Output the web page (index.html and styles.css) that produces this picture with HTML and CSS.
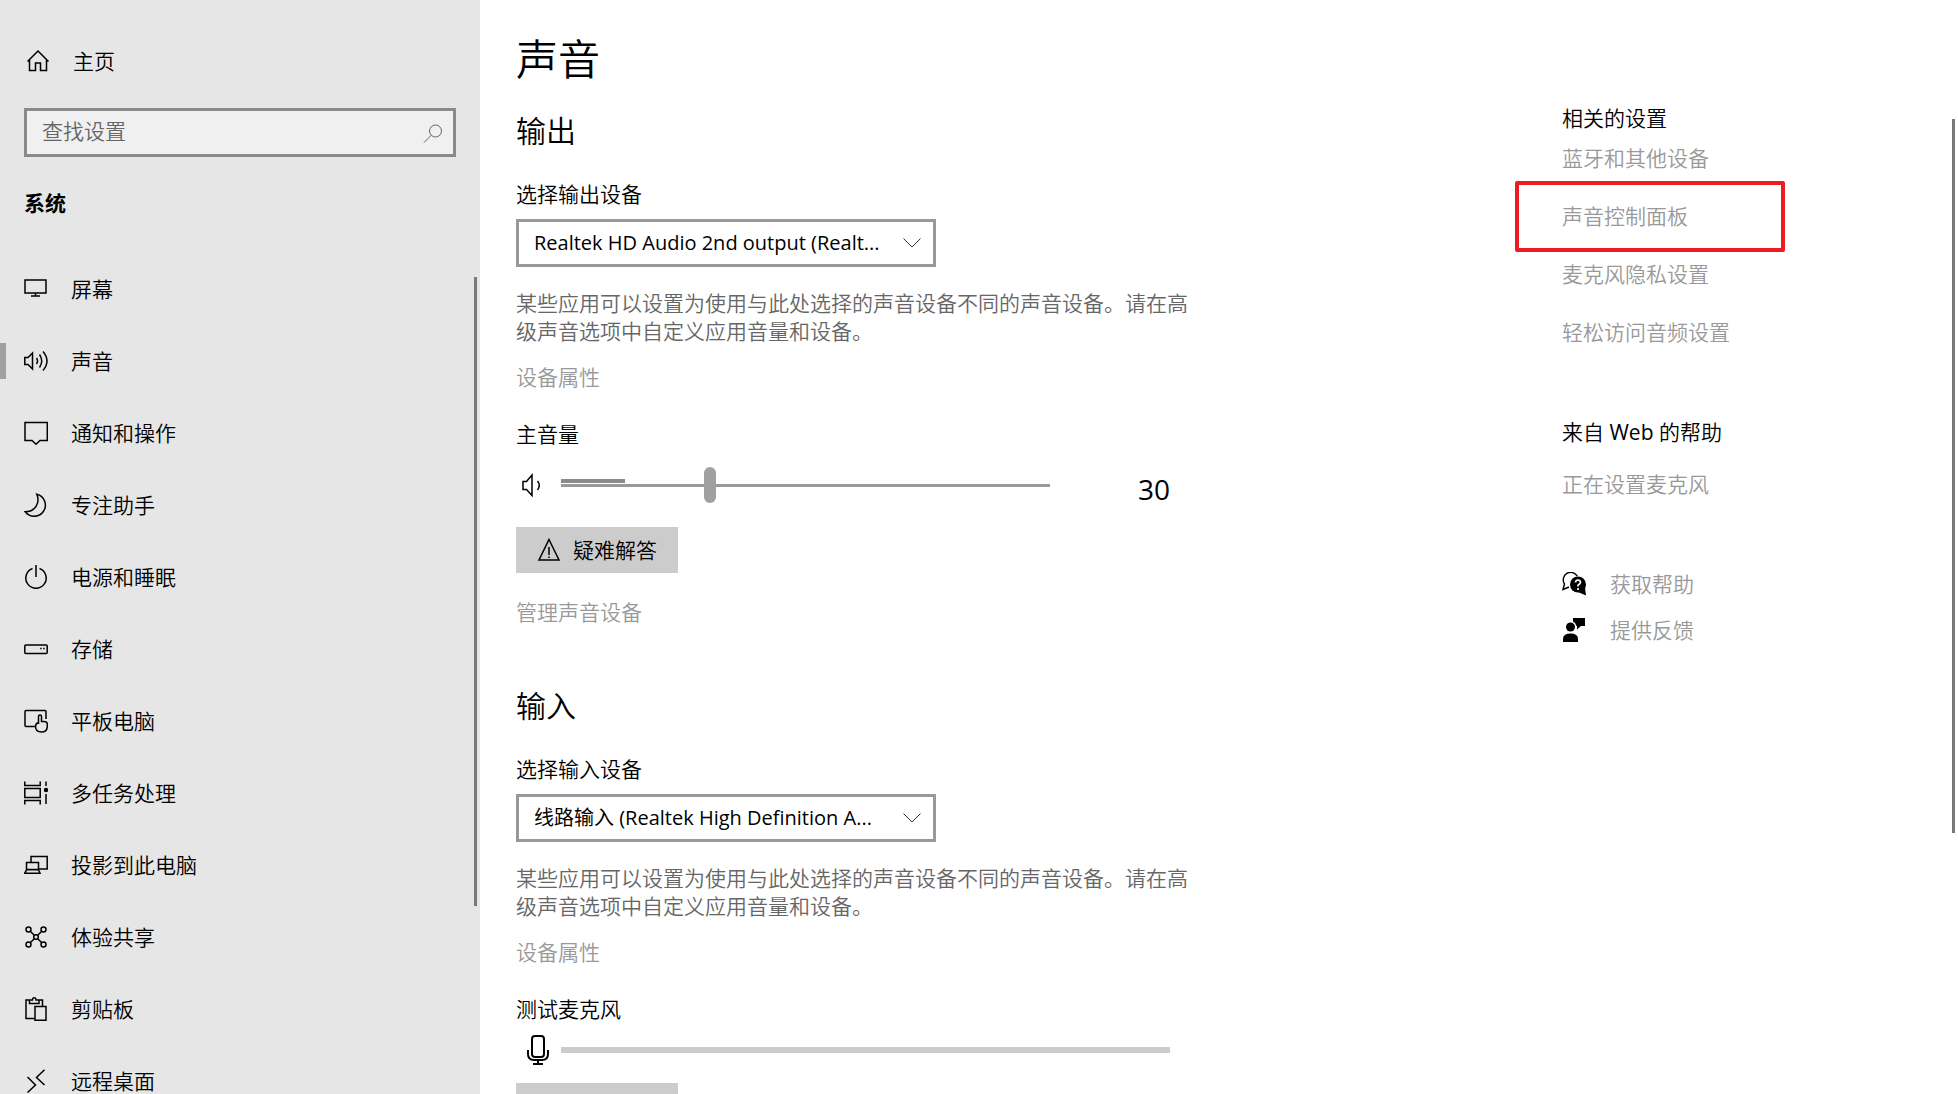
FILE: index.html
```html
<!DOCTYPE html>
<html lang="zh-CN">
<head>
    <meta charset="UTF-8">
    <title>设置</title>
    <link rel="stylesheet" href="styles.css">
</head>
<body>
    <div class="sidebar">
        <a class="home" href="#">
            <svg class="icon" viewBox="0 0 24 24"><path d="M1.5 12.5 12 2l10.500 10.500M3.500 10.500V21.500H9.500V14H14.500V21.500H20.500V10.500"/></svg>
            <span>主页</span>
        </a>
        <div class="search">
            <input type="text" id="search" placeholder="查找设置" aria-label="查找设置">
            <svg class="search-icon" viewBox="0 0 20 20"><circle cx="12.500" cy="7" r="6"/><path d="M8.200 11.300 1 18.500"/></svg>
        </div>
        <h2 class="section-name">系统</h2>
        <nav class="menu">
            <a href="#">
                <svg class="icon" viewBox="0 0 24 24"><path d="M1 3H22V16H1ZM11.500 16v3M7 19h9"/></svg>
                <span>屏幕</span>
            </a>
            <a href="#" class="active">
                <svg class="icon" viewBox="0 0 24 24"><path d="M.8 8.500H4L8.500 4V20L4 15.500H.8ZM12.500 9q2 3 0 6M15.500 5.500q4.500 6.500 0 13M19 2.500q8 9.500 0 19"/></svg>
                <span>声音</span>
            </a>
            <a href="#">
                <svg class="icon" viewBox="0 0 24 24"><path d="M1 1.500H23.300V19.500H16L12 23.200 8 19.500H1Z"/></svg>
                <span>通知和操作</span>
            </a>
            <a href="#">
                <svg class="icon" viewBox="0 0 24 24"><path d="M12.800 1.200A11.200 11.200 0 1 1 1.200 18.800C11 18.800 16.500 10 12.800 1.200Z"/></svg>
                <span>专注助手</span>
            </a>
            <a href="#">
                <svg class="icon" viewBox="0 0 24 24"><path d="M12 0V12M8.500 3.500A10.200 10.200 0 1 0 15.500 3.500"/></svg>
                <span>电源和睡眠</span>
            </a>
            <a href="#">
                <svg class="icon" viewBox="0 0 24 24"><rect x=".8" y="8" width="22.400" height="8.500" rx="1"/><path d="M16.200 11.500h1.500M19.200 11.500h1.500"/></svg>
                <span>存储</span>
            </a>
            <a href="#">
                <svg class="icon" viewBox="0 0 24 24"><path d="M11 17.500H2Q1 17.500 1 16.500V2.500Q1 1.500 2 1.500H21Q22 1.500 22 2.500V10M14.500 15V7.500Q14.500 6 16 6T17.500 7.500V12.500H20Q23.300 12.500 23.300 15V17Q23.300 23 17.500 23T11.500 17.500Q11.500 14.500 14.500 13.500"/></svg>
                <span>平板电脑</span>
            </a>
            <a href="#">
                <svg class="icon" viewBox="0 0 24 24"><path d="M.8 .5V4.500H16.200V.5M.8 7.500H16.200V16.500H.8ZM.8 23.500V19.500H16.200V23.500M22 .5V5M22 13V23"/><circle class="fill" cx="22" cy="9" r="2.200"/></svg>
                <span>多任务处理</span>
            </a>
            <a href="#">
                <svg class="icon" viewBox="0 0 24 24"><path d="M7 9V3.500H23.200V16H15M2.500 16.500V9.500H14.500V16.500ZM.8 20.200H16L14.500 16.800H2.500Z"/></svg>
                <span>投影到此电脑</span>
            </a>
            <a href="#">
                <svg class="icon" viewBox="0 0 24 24"><circle cx="4.500" cy="4.500" r="2.500"/><circle cx="19.500" cy="4.500" r="2.500"/><circle cx="4.500" cy="19.500" r="2.500"/><circle cx="19.500" cy="19.500" r="2.500"/><circle cx="12" cy="12" r="2.300"/><path d="M6.200 6.200 10.300 10.300M17.800 6.200 13.700 10.300M6.200 17.800 10.300 13.700M17.800 17.800 13.700 13.700"/></svg>
                <span>体验共享</span>
            </a>
            <a href="#">
                <svg class="icon" viewBox="0 0 24 24"><path d="M10.500 21.500H2V3H5.500V6.500H15V3H18.500V9.500M5.500 3H8.500Q8.500 .8 10.300 .8T12 3H15M11 9.500H22V23.200H11Z"/></svg>
                <span>剪贴板</span>
            </a>
            <a href="#">
                <svg class="icon" viewBox="0 0 24 24"><path d="M3.500 8 11.500 16 3.500 23.500M20.500 .8 12.500 8.500 20.500 16"/></svg>
                <span>远程桌面</span>
            </a>
        </nav>
        <div class="sidebar-thumb"></div>
    </div>

    <main class="content">
        <h1>声音</h1>

        <section>
            <h2>输出</h2>
            <label class="label" for="output">选择输出设备</label>
            <div class="dropdown">
                <select id="output">
                    <option>Realtek HD Audio 2nd output (Realt...</option>
                </select>
                <svg class="chevron" viewBox="0 0 18 10"><path d="M.5 .5 9 9 17.500 .5"/></svg>
            </div>
            <p class="description">某些应用可以设置为使用与此处选择的声音设备不同的声音设备。请在高级声音选项中自定义应用音量和设备。</p>
            <a class="link" href="#">设备属性</a>
            <label class="label" for="volume">主音量</label>
            <div class="volume-row">
                <svg class="speaker" viewBox="0 0 24 24"><path d="M2 8.500H5.500L11 2V22.500L5.500 16.500H2ZM16.500 8q3.500 4.500 0 9"/></svg>
                <div class="slider">
                    <input type="range" id="volume" min="0" max="100" value="30">
                    <div class="level"></div>
                </div>
                <output class="volume-value" for="volume">30</output>
            </div>
            <button class="button" type="button">
                <svg class="warning" viewBox="0 0 24 24"><path d="M12 1.500 22 22H2ZM12 9V17M12 18.500V20"/></svg>
                <span>疑难解答</span>
            </button>
            <a class="link manage" href="#">管理声音设备</a>
        </section>

        <section class="input-section">
            <h2>输入</h2>
            <label class="label" for="input">选择输入设备</label>
            <div class="dropdown">
                <select id="input">
                    <option>线路输入 (Realtek High Definition A...</option>
                </select>
                <svg class="chevron" viewBox="0 0 18 10"><path d="M.5 .5 9 9 17.500 .5"/></svg>
            </div>
            <p class="description">某些应用可以设置为使用与此处选择的声音设备不同的声音设备。请在高级声音选项中自定义应用音量和设备。</p>
            <a class="link" href="#">设备属性</a>
            <div class="label">测试麦克风</div>
            <div class="mic-row">
                <svg class="mic" viewBox="0 0 24 30"><rect x="6" y="1" width="12" height="21" rx="3"/><path d="M2 15V19Q2 25 8 25H16Q22 25 22 19V15M12 25V29M7 29H17"/></svg>
                <div class="mic-level"></div>
            </div>
            <button class="button test-button" type="button" aria-label="测试麦克风"></button>
        </section>
    </main>

    <aside class="related">
        <h3>相关的设置</h3>
        <ul class="related-links">
            <li><a class="link" href="#">蓝牙和其他设备</a></li>
            <li class="highlight"><a class="link" href="#">声音控制面板</a></li>
            <li><a class="link" href="#">麦克风隐私设置</a></li>
            <li><a class="link" href="#">轻松访问音频设置</a></li>
        </ul>
        <h3 class="web-help">来自 <span class="latin">Web</span> 的帮助</h3>
        <a class="link web-link" href="#">正在设置麦克风</a>
        <div class="support">
            <a class="link" href="#">
                <svg viewBox="0 0 24 24"><path d="M15.300 4.200A7.500 7.500 0 1 0 2.500 12L1 17.500 7 15" fill="none" stroke="#000" stroke-width="1.400"/><circle cx="16" cy="12.500" r="8"/><path d="M23 16 24 23.500 16 20Z"/><path d="M13.500 10.500Q13.700 8 16 8T18.500 10.300Q18.500 12 16 13.200V14.500M16 16V18" fill="none" stroke="#fff" stroke-width="1.700"/></svg>
                <span>获取帮助</span>
            </a>
            <a class="link" href="#">
                <svg viewBox="0 0 24 24"><circle cx="8.500" cy="9" r="4.500"/><path d="M1 24V21Q1 15.500 8.500 15.500T16 21V24ZM11 0H23V8H19L15 11.500V8H14.500Q13.500 4.500 11 3.500Z"/></svg>
                <span>提供反馈</span>
            </a>
        </div>
    </aside>
    <div class="page-thumb"></div>
</body>
</html>
```
FILE: styles.css
```css
* {
    box-sizing: border-box;
}
body {
    margin: 0;
    height: 100vh;
    display: flex;
    overflow: hidden;
    position: relative;
    background-color: #fff;
    color: #000;
    font-family: "Open Sans", "Noto Sans CJK SC", sans-serif;
    font-size: 21px;
    font-weight: 350;
    line-height: 28px;
}
h1, h2, h3, p, ul {
    margin: 0;
    padding: 0;
    font-weight: 350;
}
a {
    color: inherit;
    text-decoration: none;
}
input, select, button {
    font: inherit;
    color: inherit;
    border-radius: 0;
}
svg {
    display: block;
    flex-shrink: 0;
}

/* left menu */
.sidebar {
    position: relative;
    flex: 0 0 480px;
    background-color: #e6e6e6;
    overflow: hidden;
}
.icon, .speaker, .mic, .warning {
    width: 24px;
    height: 24px;
    fill: none;
    stroke: #000;
    stroke-width: 1.5;
}
.icon .fill {
    fill: #000;
    stroke: none;
}
.home {
    display: flex;
    align-items: center;
    gap: 23px;
    padding: 47px 26px 33px;
}
.search {
    position: relative;
    margin: 0 24px;
}
.search input {
    display: block;
    width: 100%;
    height: 49px;
    padding: 0 48px 3px 15px;
    border: 3px solid #8a8a8a;
    background-color: #f0f0f0;
}
.search input::placeholder {
    color: #666;
    opacity: 1;
}
.search-icon {
    position: absolute;
    right: 13px;
    top: 16px;
    width: 20px;
    height: 20px;
    fill: none;
    stroke: #666;
}
.section-name {
    margin: 32px 24px 36px;
    font-size: 21px;
    font-weight: 700;
}
.menu a {
    position: relative;
    display: flex;
    align-items: center;
    gap: 23px;
    height: 72px;
    padding-left: 24px;
}
.menu .active::before {
    content: '';
    position: absolute;
    left: 0;
    width: 6px;
    height: 36px;
    background-color: #a0a0a0;
}
.sidebar-thumb, .page-thumb {
    position: absolute;
    width: 3px;
    background-color: #7a7a7a;
}
.sidebar-thumb {
    right: 3px;
    top: 277px;
    height: 629px;
}
.page-thumb {
    right: 3px;
    top: 119px;
    height: 714px;
}

/* sound settings */
.content {
    flex: 1;
    padding: 31px 36px 0;
}
h1 {
    font-size: 42px;
    line-height: 56px;
}
.content h2 {
    margin-top: 24px;
    font-size: 30px;
    line-height: 40px;
}
.content .input-section h2 {
    margin-top: 60px;
}
.label {
    display: block;
    margin-top: 29px;
}
.dropdown {
    position: relative;
    max-width: 420px;
    margin-top: 11px;
}
.dropdown select {
    display: block;
    width: 100%;
    height: 48px;
    padding: 0 36px 0 15px;
    border: 3px solid #999;
    background-color: #fff;
    font-size: 20px;
    font-weight: 400;
    -webkit-appearance: none;
    appearance: none;
}
.chevron {
    position: absolute;
    right: 15px;
    top: 19px;
    width: 18px;
    height: 10px;
    fill: none;
    stroke: #333;
    pointer-events: none;
}
.description {
    max-width: 680px;
    margin: 22px 0 18px;
    color: #666;
}
.link {
    color: #999;
}
.content .link {
    display: block;
}
.volume-row, .mic-row {
    display: flex;
    align-items: center;
    max-width: 654px;
}
.volume-row {
    height: 40px;
    margin-top: 17px;
}
.speaker {
    margin: 0 16px 0 5px;
}
.slider {
    position: relative;
    width: 489px;
}
.slider input {
    display: block;
    width: 100%;
    height: 36px;
    margin: 0;
    background: none;
    -webkit-appearance: none;
    appearance: none;
}
.slider input::-webkit-slider-runnable-track {
    height: 3px;
    background-color: #999;
}
.slider input::-webkit-slider-thumb {
    -webkit-appearance: none;
    width: 12px;
    height: 36px;
    margin-top: -17px;
    border-radius: 6px;
    background-color: #a0a0a0;
}
/* current output level, sits on top of the track */
.level {
    position: absolute;
    left: 0;
    top: 12px;
    width: 13%;
    height: 4px;
    background-color: #8a8a8a;
}
.volume-value {
    margin-left: auto;
    padding-top: 8px;
    font-size: 28px;
    font-weight: 400;
}
.button {
    display: flex;
    align-items: center;
    gap: 12px;
    height: 46px;
    margin-top: 22px;
    padding: 0 21px;
    border: none;
    background-color: #ccc;
}
.manage {
    margin-top: 25px;
}
.mic-row {
    margin-top: 12px;
}
.mic {
    height: 30px;
    margin: 0 11px 0 10px;
    stroke-width: 2;
}
.mic-level {
    flex: 1;
    height: 6px;
    background-color: #ccc;
}
.test-button {
    width: 162px;
    margin-top: 18px;
}

/* right column */
.related {
    flex: 0 0 396px;
    padding-top: 104px;
}
.related h3 {
    font-size: 21px;
}
.related .latin {
    font-weight: 400;
}
.related-links {
    list-style: none;
}
.related-links li {
    height: 58px;
    padding-top: 12px;
}
.related-links .highlight {
    width: 270px;
    height: 71px;
    margin: -9px 0 -4px -47px;
    padding: 17px 43px;
    border: 4px solid #ed1c24;
    border-radius: 2px;
}
.related .web-help {
    margin-top: 54px;
}
.web-link {
    display: block;
    margin-top: 24px;
}
.support {
    display: flex;
    flex-direction: column;
    gap: 18px;
    margin-top: 72px;
}
.support a {
    display: flex;
    align-items: center;
    gap: 24px;
}
.support svg {
    width: 24px;
    height: 24px;
    fill: #000;
}
```
